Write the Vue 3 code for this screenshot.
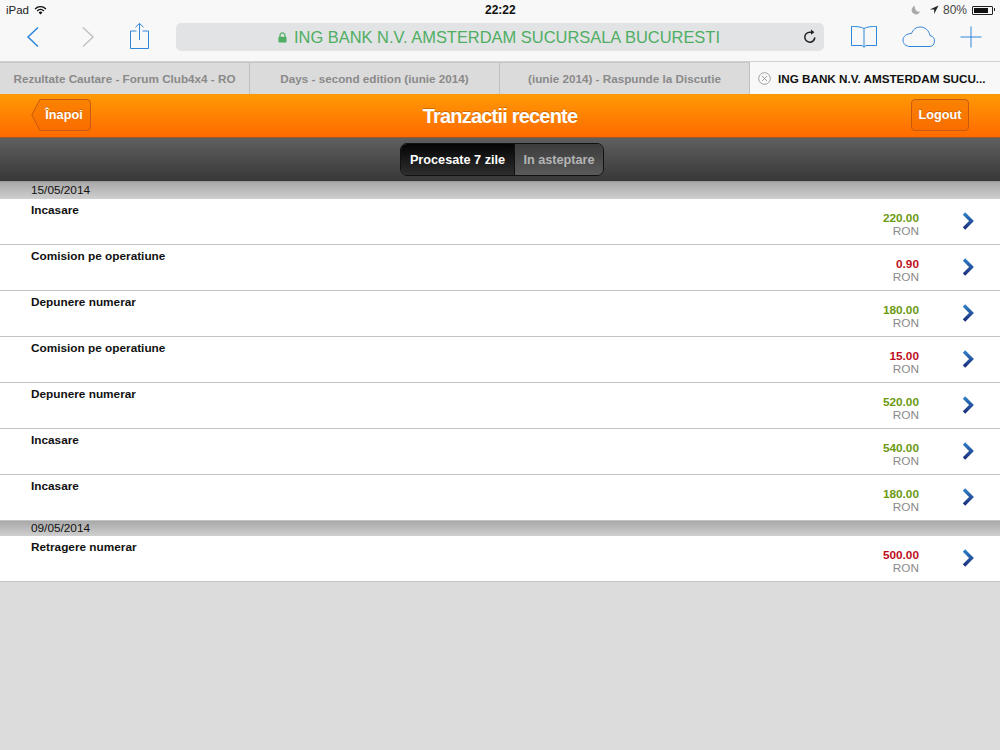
<script setup>
const tabs = [
  'Rezultate Cautare - Forum Club4x4 - RO',
  'Days - second edition (iunie 2014)',
  '(iunie 2014) - Raspunde la Discutie',
]

const sections = [
  {
    date: '15/05/2014',
    rows: [
      { name: 'Incasare', amount: '220.00', type: 'in' },
      { name: 'Comision pe operatiune', amount: '0.90', type: 'out' },
      { name: 'Depunere numerar', amount: '180.00', type: 'in' },
      { name: 'Comision pe operatiune', amount: '15.00', type: 'out' },
      { name: 'Depunere numerar', amount: '520.00', type: 'in' },
      { name: 'Incasare', amount: '540.00', type: 'in' },
      { name: 'Incasare', amount: '180.00', type: 'in' },
    ],
  },
  {
    date: '09/05/2014',
    rows: [{ name: 'Retragere numerar', amount: '500.00', type: 'out' }],
  },
]
</script>

<template>
  <div class="page">
    <div class="status">
      <div class="status-left">
        <span>iPad</span>
        <svg width="13" height="10" viewBox="0 0 13 10">
          <path d="M0.6 3.4a8.3 8.3 0 0 1 11.8 0l-1 1a6.9 6.9 0 0 0-9.8 0z" fill="#111" />
          <path d="M2.6 5.4a5.5 5.5 0 0 1 7.8 0l-1 1a4.1 4.1 0 0 0-5.8 0z" fill="#111" />
          <path d="M4.6 7.4a2.7 2.7 0 0 1 3.8 0L6.5 9.4z" fill="#111" />
        </svg>
      </div>
      <div class="status-time">22:22</div>
      <div class="status-right">
        <svg width="10" height="10" viewBox="0 0 10 10">
          <path d="M4 0.8a4.4 4.4 0 1 0 5.2 5.8A4.6 4.6 0 0 1 4 0.8z" fill="#aaa" />
        </svg>
        <svg class="arrow" width="10" height="10" viewBox="0 0 10 10">
          <path d="M9.5 0.5L0.8 4.6h4.4v4.5z" fill="#222" />
        </svg>
        <span>80%</span>
        <div class="battery"><div class="battery-fill"></div></div>
      </div>
    </div>

    <div class="toolbar">
      <svg class="back" width="14" height="22" viewBox="0 0 14 22">
        <path d="M12 1.5L2 11l10 9.5" fill="none" stroke="#2f86d8" stroke-width="1.5" />
      </svg>
      <svg class="forward" width="14" height="22" viewBox="0 0 14 22">
        <path d="M2 1.5L12 11 2 20.5" fill="none" stroke="#c2c2c2" stroke-width="1.5" />
      </svg>
      <svg class="share" width="22" height="28" viewBox="0 0 22 28">
        <path d="M7.5 9H1.5v17.5h18V9h-6M10.5 18V1.5M6.5 5.2l4-3.8 4 3.8" fill="none" stroke="#2f86d8" stroke-width="1" />
      </svg>
      <div class="address">
        <div class="address-text">
          <svg width="9" height="11" viewBox="0 0 9 11">
            <path d="M2 5V3.4a2.5 2.5 0 0 1 5 0V5" fill="none" stroke="#4fae62" stroke-width="1.2" />
            <rect x="0.5" y="4.8" width="8" height="5.7" rx="0.8" fill="#4fae62" />
          </svg>
          <span>ING BANK N.V. AMSTERDAM SUCURSALA BUCURESTI</span>
        </div>
        <svg class="reload" width="14" height="15" viewBox="0 0 14 15">
          <path d="M11.8 8.4A5 5 0 1 1 7 3.2h2" fill="none" stroke="#222" stroke-width="1.5" />
          <path d="M8 0.6l3.4 2.6L8 5.8z" fill="#222" />
        </svg>
      </div>
      <svg class="book" width="28" height="24" viewBox="0 0 28 24">
        <path d="M14 3.5C11 1.5 5 1.5 1.5 1.5v19H12l2 1.8 2-1.8h10.5v-19C23 1.5 17 1.5 14 3.5zM14 3.5v18" fill="none" stroke="#2f86d8" stroke-width="1" />
      </svg>
      <svg class="cloud" width="34" height="22" viewBox="0 0 34 22">
        <path d="M8 20.5h19a5.5 5.5 0 0 0 1-10.9C27 4.5 23 1 18.5 1 14 1 11 3.5 9.5 7.5 4.5 7.5 1 10.5 1 14c0 3.8 3 6.5 7 6.5z" fill="none" stroke="#2f86d8" stroke-width="1" />
      </svg>
      <svg class="plus" width="22" height="22" viewBox="0 0 22 22">
        <path d="M11 0.5v21M0.5 11h21" fill="none" stroke="#2f86d8" stroke-width="1" />
      </svg>
    </div>

    <div class="tabs">
      <div v-for="tab in tabs" :key="tab" class="tab">{{ tab }}</div>
      <div class="tab active">
        <svg width="13" height="13" viewBox="0 0 13 13">
          <circle cx="6.5" cy="6.5" r="5.8" fill="none" stroke="#8a8a8a" stroke-width="0.8" />
          <path d="M4 4l5 5M9 4l-5 5" fill="none" stroke="#8a8a8a" stroke-width="0.8" />
        </svg>
        <span>ING BANK N.V. AMSTERDAM SUCU...</span>
      </div>
    </div>

    <div class="header">
      <div class="back-button">
        <svg class="back-shape" width="60" height="32" viewBox="0 0 60 32">
          <path d="M9 0.5H56a3.5 3.5 0 0 1 3.5 3.5V28a3.5 3.5 0 0 1-3.5 3.5H9L0.8 16z" fill="rgba(240,100,0,0.35)" stroke="#c55a10" />
        </svg>
        <span>Înapoi</span>
      </div>
      <div class="title">Tranzactii recente</div>
      <div class="logout">Logout</div>
    </div>

    <div class="subbar">
      <div class="segments">
        <div class="segment on">Procesate 7 zile</div>
        <div class="segment">In asteptare</div>
      </div>
    </div>

    <template v-for="(section, s) in sections" :key="section.date">
      <div class="date" :class="{ later: s > 0 }">{{ section.date }}</div>
      <div v-for="(row, i) in section.rows" :key="i" class="row">
        <div class="name">{{ row.name }}</div>
        <div class="money">
          <div class="amount" :class="row.type">{{ row.amount }}</div>
          <div class="currency">RON</div>
        </div>
        <svg class="chevron" width="12" height="18" viewBox="0 0 12 18">
          <defs>
            <linearGradient id="chev" x1="0" y1="0" x2="0" y2="1">
              <stop offset="0" stop-color="#2f7fc8" />
              <stop offset="1" stop-color="#1c2f7c" />
            </linearGradient>
          </defs>
          <path d="M2 1.5L9.5 9 2 16.5" fill="none" stroke="url(#chev)" stroke-width="3.4" />
        </svg>
      </div>
    </template>
  </div>
</template>

<style>
html,
body {
  margin: 0;
  background: #dcdcdc;
}
</style>

<style scoped>
.page {
  width: 1000px;
  height: 750px;
  overflow: hidden;
  background: #dcdcdc;
  font-family: "Liberation Sans", Arial, sans-serif;
}

.status {
  height: 20px;
  background: #f8f8f8;
  display: flex;
  align-items: center;
  justify-content: space-between;
  padding: 0 7px 0 6px;
  font-size: 11.5px;
  color: #222;
  position: relative;
}

.status-left {
  display: flex;
  align-items: center;
  gap: 5px;
}

.status-time {
  font-size: 12px;
  color: #111;
  font-weight: bold;
  position: absolute;
  left: 485px;
  top: 3px;
}

.status-right {
  display: flex;
  align-items: center;
  gap: 4px;
  color: #444;
  font-size: 12px;
}

.arrow {
  margin-left: 4px;
}

.battery {
  width: 21px;
  height: 9px;
  border: 1px solid #222;
  box-sizing: border-box;
  border-radius: 1px;
  padding: 1px;
  margin-left: 1px;
  position: relative;
}

.battery::after {
  content: "";
  position: absolute;
  right: -3px;
  top: 1px;
  width: 1px;
  height: 3px;
  background: #222;
}

.battery-fill {
  width: 80%;
  height: 100%;
  background: #111;
}

.toolbar {
  height: 42px;
  background: #f8f8f8;
  display: flex;
  align-items: center;
  padding: 0 0 7px 26px;
  border-bottom: 1px solid #d0d0d0;
  box-sizing: border-box;
}

.toolbar svg {
  flex: none;
}

.forward {
  margin-left: 41px;
}

.share {
  margin-left: 34px;
  margin-bottom: 2px;
}

.address {
  width: 648px;
  height: 28px;
  margin-left: 25px;
  background: #e2e3e5;
  border-radius: 5px;
  display: flex;
  align-items: center;
  position: relative;
  flex: none;
}

.address-text {
  display: flex;
  align-items: center;
  gap: 7px;
  color: #4fae62;
  font-size: 16.45px;
  margin-left: 102px;
  white-space: nowrap;
}

.reload {
  position: absolute;
  right: 7px;
  top: 6px;
}

.book {
  margin-left: 26px;
}

.cloud {
  margin-left: 24px;
}

.plus {
  margin-left: 24px;
}

.tabs {
  height: 32px;
  display: flex;
}

.tab {
  width: 250px;
  box-sizing: border-box;
  background: #dbdbdb;
  border-right: 1px solid #bfbfbf;
  color: #8a8a8a;
  font-size: 11.7px;
  font-weight: bold;
  display: flex;
  align-items: center;
  justify-content: center;
  white-space: nowrap;
  box-shadow: inset 0 1px 0 #c8c8c8;
}

.tab.active {
  background: #f8f8f8;
  color: #111;
  border-right: 0;
  box-shadow: none;
  justify-content: flex-start;
  gap: 7px;
  padding-left: 8px;
}

.header {
  height: 44px;
  box-sizing: border-box;
  background: linear-gradient(#ff9a05, #ff6a00);
  border-bottom: 1px solid #a8542a;
  display: flex;
  align-items: center;
  justify-content: space-between;
  padding: 0 31px 1px;
  position: relative;
}

.back-button,
.logout {
  height: 32px;
  box-sizing: border-box;
  color: #fff;
  font-size: 12.7px;
  font-weight: bold;
  display: flex;
  align-items: center;
  justify-content: center;
  text-shadow: 0 -1px 0 rgba(120, 60, 0, 0.4);
}

.back-button {
  width: 60px;
  position: relative;
  padding-left: 6px;
}

.back-shape {
  position: absolute;
  left: 0;
  top: 0;
}

.back-button span {
  position: relative;
}

.logout {
  width: 58px;
  border: 1px solid #c55a10;
  border-radius: 4px;
  background: rgba(240, 100, 0, 0.35);
}

.title {
  position: absolute;
  left: 0;
  right: 0;
  padding-top: 3px;
  text-align: center;
  color: #fff;
  font-size: 20px;
  font-weight: bold;
  letter-spacing: -0.8px;
  text-shadow: 0 -1px 0 rgba(120, 60, 0, 0.4);
}

.subbar {
  height: 44px;
  box-sizing: border-box;
  background: linear-gradient(#5f5f5f, #383838);
  border-bottom: 1px solid #9a9a9a;
  display: flex;
  align-items: center;
  justify-content: center;
}

.segments {
  display: flex;
  width: 204px;
  height: 33px;
  margin-left: 4px;
  box-sizing: border-box;
  border: 1px solid #111;
  border-radius: 7px;
  overflow: hidden;
  font-size: 12.7px;
  font-weight: bold;
}

.segment {
  display: flex;
  align-items: center;
  justify-content: center;
  flex: 1;
  color: #b4b4b4;
  background: linear-gradient(#3c3c3c, #5a5a5a);
}

.segment.on {
  flex: none;
  width: 113px;
  color: #fff;
  background: linear-gradient(#050505, #2e2e2e);
  border-right: 1px solid #111;
}

.date {
  height: 17px;
  box-sizing: border-box;
  padding-left: 31px;
  background: linear-gradient(#a9a9a9, #cfcfcf);
  color: #111;
  font-size: 11.8px;
  line-height: 17px;
}

.date.later {
  height: 15px;
  line-height: 14px;
}

.row {
  height: 46px;
  box-sizing: border-box;
  background: #fff;
  border-bottom: 1px solid #c4c4c4;
  display: flex;
  padding-left: 31px;
  position: relative;
}

.name {
  flex: 1;
  padding-top: 4px;
  font-size: 11.8px;
  font-weight: bold;
  color: #111;
}

.money {
  width: 60px;
  margin-right: 81px;
  text-align: right;
  padding-top: 13px;
  font-size: 11.8px;
  line-height: 13px;
}

.amount {
  font-weight: bold;
}

.amount.in {
  color: #6b9a10;
}

.amount.out {
  color: #bd0f1d;
}

.currency {
  color: #8a8a8a;
}

.chevron {
  position: absolute;
  left: 962px;
  top: 13px;
}
</style>
